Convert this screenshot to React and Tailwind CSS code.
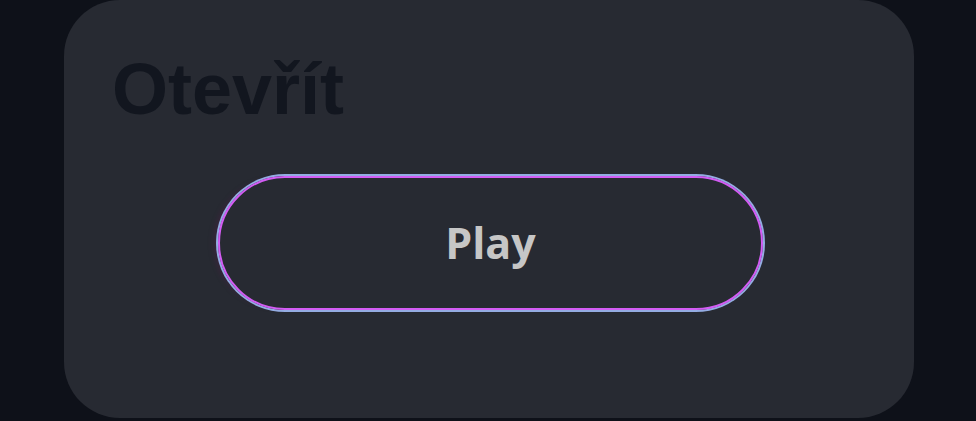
import React from 'react'

export default function App() {
  return (
    <div className="h-[421px] w-full overflow-hidden bg-[#0e1119]">
      <div className="ml-[64px] flex h-[418px] w-[850px] flex-col rounded-[56px] bg-[#272a32] pl-12 pt-[53px]">
        <h1 className="text-[72px] font-bold leading-none text-[#12161f] [font-family:'Liberation_Sans',Arial,sans-serif]">
          Otevřít
        </h1>

        {/* play button */}
        <div className="mt-[51px] flex">
          <button className="ml-[106px] flex h-[134px] w-[545px] items-center justify-center rounded-full border-2 border-[#d35cf4] bg-transparent shadow-[0_0_0_2px_#94ace2,-8px_0_6px_-4px_rgba(120,20,90,0.25)]">
            <span className="text-[43px] font-bold text-[#c6c6c6] [font-family:'Open_Sans','Noto_Sans',sans-serif]">
              Play
            </span>
          </button>
        </div>
      </div>
    </div>
  )
}
